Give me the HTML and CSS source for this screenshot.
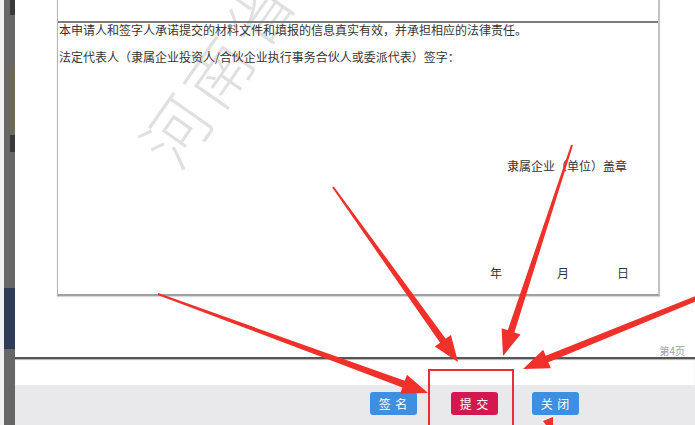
FILE: index.html
```html
<!DOCTYPE html>
<html lang="zh-CN">
<head>
<meta charset="utf-8">
<title>签名提交</title>
<link rel="stylesheet" href="styles.css">
</head>
<body>
<div class="screen">
  <div class="rail">
    <div class="seg seg-dark"></div>
    <div class="seg seg-gray h50"></div>
    <div class="seg seg-olive"></div>
    <div class="seg seg-dark h17"></div>
    <div class="seg seg-gray h136"></div>
    <div class="seg seg-navy"></div>
    <div class="seg seg-gray grow"></div>
  </div>
  <div class="main">
    <div class="viewer">
      <div class="page">
        <svg class="watermark" width="601" height="294" viewBox="0 0 601 294">
          <text x="120" y="173" transform="rotate(-55 120 173)">河南省</text>
        </svg>
        <div class="sheet">
          <p class="line l1">本申请人和签字人承诺提交的材料文件和填报的信息真实有效，并承担相应的法律责任。</p>
          <p class="line l2">法定代表人（隶属企业投资人/合伙企业执行事务合伙人或委派代表）签字：</p>
          <p class="line stamp">隶属企业（单位）盖章</p>
          <div class="line date">
            <span class="d-year">年</span>
            <span class="d-month">月</span>
            <span class="d-day">日</span>
          </div>
        </div>
      </div>
      <span class="pageno">第4页</span>
    </div>
    <div class="gap"></div>
    <div class="toolbar">
      <button class="btn btn-blue">签 名</button>
      <button class="btn btn-red">提 交</button>
      <button class="btn btn-blue">关 闭</button>
    </div>
  </div>
  <svg class="annotations" width="695" height="425" viewBox="0 0 695 425">
    <rect x="429" y="370" width="84" height="70" fill="none" stroke="#e8322c" stroke-width="2"/>
    <polygon fill="#f0302a" points="332.2,187.6 440.1,342.8 434.8,346.6 458,362 451.0,335.0 445.7,338.8 333.8,186.4"/>
    <polygon fill="#f0302a" points="571.05,144.7 507.8,330.2 501.6,328.2 503,356 520.6,334.4 514.4,332.4 572.95,145.3"/>
    <polygon fill="#f0302a" points="704.0,292.7 545.7,355.8 543.2,349.8 523,369 550.9,368.2 548.3,362.2 706.0,297.3"/>
    <polygon fill="#f0302a" points="157.7,294.9 402.4,387.4 400.2,393.5 428,393 407.0,374.7 404.8,380.8 158.3,293.1"/>
    <polygon fill="#f0302a" points="543,421 553,417 553,425 546,425"/>
  </svg>
</div>
</body>
</html>
```

FILE: styles.css
```css
* { box-sizing: border-box; }

html, body {
  margin: 0;
  padding: 0;
  width: 695px;
  height: 425px;
  overflow: hidden;
  background: #ffffff;
  font-family: "Noto Sans CJK SC", "Noto Sans", sans-serif;
}

.screen {
  position: relative;
  width: 695px;
  height: 425px;
  display: flex;
}

/* left rail */
.rail {
  width: 15px;
  flex: none;
  display: flex;
  flex-direction: column;
  border-left: 4px solid #f1f1f1;
}
.seg { width: 100%; }
.seg-dark { height: 15px; background: linear-gradient(to right, #676767 6px, #3a3a3a 6px); }
.seg-gray { background: #676767; }
.seg-olive { height: 70px; background: linear-gradient(to right, #676767 6px, #6d6a56 6px); }
.h50 { height: 50px; }
.h17 { height: 17px; }
.h136 { height: 136px; }
.seg-navy { height: 61px; background: #2f3b57; }
.grow { flex: 1; }

/* main */
.main {
  flex: 1;
  display: flex;
  flex-direction: column;
}

.viewer {
  height: 357px;
  display: flex;
  flex-direction: column;
  padding-left: 42px;
}

.page {
  position: relative;
  width: 603px;
  height: 296px;
  background: #ffffff;
  border-left: 1px solid #b4b4b4;
  border-right: 2px solid #c4c4c4;
  border-bottom: 2px solid #a2a2a2;
  box-shadow: 0 1px 1px #d8d8d8;
}

.watermark {
  position: absolute;
  left: 0;
  top: 0;
}
.watermark text {
  font-family: "Noto Sans CJK SC", sans-serif;
  font-weight: 300;
  font-size: 66px;
  letter-spacing: 6px;
  fill: #e0e0e0;
}

.sheet {
  position: relative;
  margin-top: 21px;
  border-top: 2px solid #7c7c7c;
  padding-left: 1px;
  color: #353535;
  font-size: 12px;
}

.line {
  margin: 0;
  line-height: 14px;
  height: 14px;
  white-space: nowrap;
}
.l2 { margin-top: 13px; }
.stamp {
  margin-top: 95px;
  text-align: right;
  padding-right: 31px;
}
.date {
  margin-top: 93px;
  display: flex;
  justify-content: flex-end;
  padding-right: 29px;
}
.d-month { margin-left: 55px; }
.d-day { margin-left: 48px; }

.pageno {
  margin-top: auto;
  align-self: flex-end;
  margin-right: 10px;
  font-size: 10px;
  line-height: 12px;
  color: #a0a0a0;
}

.gap {
  height: 28px;
  border-top: 2px solid #555555;
  box-shadow: inset 0 1px 1px #b0b0b0;
  background: #ffffff;
}

.toolbar {
  flex: 1;
  background: #e9e8ea;
  display: flex;
  align-items: flex-start;
  padding-top: 7px;
  padding-left: 355px;
  gap: 34px;
}

.btn {
  width: 47px;
  height: 23px;
  border: none;
  border-radius: 3px;
  padding: 0;
  color: #ffffff;
  font-family: "Noto Sans CJK SC", sans-serif;
  font-size: 12px;
  line-height: 23px;
  letter-spacing: 1px;
}
.btn-blue { background: #3e8fe0; }
.btn-red { background: #d5174f; }

.annotations {
  position: absolute;
  left: 0;
  top: 0;
  pointer-events: none;
}
```
